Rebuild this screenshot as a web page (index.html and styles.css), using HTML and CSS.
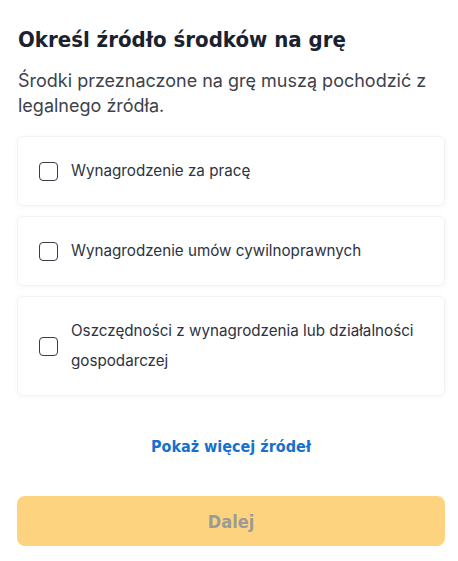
FILE: index.html
```html
<!DOCTYPE html>
<html lang="pl">
<head>
  <meta charset="UTF-8" />
  <meta name="viewport" content="width=device-width, initial-scale=1.0"/>
  <title>Źródło środków</title>
  <link rel="stylesheet" href="styles.css">
</head>
<body>
  <div class="container">
    <h2>Określ źródło środków na grę</h2>
    <p class="lead">Środki przeznaczone na grę muszą pochodzić z legalnego źródła.</p>

    <div class="options">
      <label class="option">
        <span class="box"></span>
        <span class="text">Wynagrodzenie za pracę</span>
      </label>
      <label class="option">
        <span class="box"></span>
        <span class="text">Wynagrodzenie umów cywilnoprawnych</span>
      </label>
      <label class="option">
        <span class="box"></span>
        <span class="text">Oszczędności z wynagrodzenia lub działalności gospodarczej</span>
      </label>
    </div>

    <a class="more" href="#">Pokaż więcej źródeł</a>

    <button class="next" disabled>Dalej</button>
  </div>
</body>
</html>
```

FILE: styles.css
```css
body {
  margin: 0;
  background: #fff;
  font-family: Inter, 'Noto Sans', sans-serif;
  color: #2b313d;
}
.container {
  padding: 25px 13px 0 17px;
}
h2 {
  margin: 0 0 0 1px;
  font-family: 'DejaVu Sans Condensed', 'DejaVu Sans', sans-serif;
  font-weight: bold;
  font-size: 22px;
  line-height: 30px;
  color: #1a2230;
}
.lead {
  margin: 13px 0 18px 1px;
  font-size: 18px;
  line-height: 25px;
  color: #3d424c;
}
.options {
  display: flex;
  flex-direction: column;
  gap: 10px;
}
.option {
  display: flex;
  align-items: center;
  gap: 13px;
  padding: 19px 20px 19px 21px;
  border: 1px solid #f1f2f4;
  border-radius: 6px;
  box-shadow: 0 1px 6px rgba(0,0,0,0.04);
  cursor: pointer;
}
.box {
  flex: none;
  width: 17px;
  height: 17px;
  border: 1.5px solid #363c48;
  border-radius: 4px;
}
.text {
  font-size: 15.2px;
  line-height: 30px;
  color: #2d3340;
}
.more {
  display: block;
  margin: 41px 0 0;
  text-align: center;
  font-family: 'DejaVu Sans Condensed', 'DejaVu Sans', sans-serif;
  font-weight: bold;
  font-size: 16px;
  color: #1670cf;
  text-decoration: none;
}
.next {
  display: block;
  width: 100%;
  height: 50px;
  margin-top: 40px;
  border: none;
  border-radius: 8px;
  background: #fed37f;
  color: #9b9a96;
  font-family: 'DejaVu Sans Condensed', 'DejaVu Sans', sans-serif;
  font-weight: bold;
  font-size: 18px;
}
```
